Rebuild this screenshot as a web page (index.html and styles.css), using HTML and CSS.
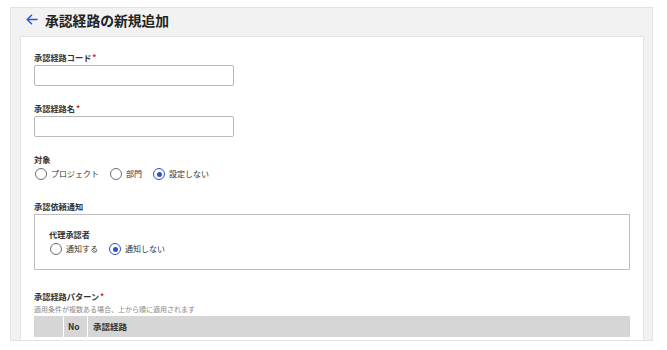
FILE: index.html
```html
<!DOCTYPE html>
<html lang="ja">
<head>
<meta charset="utf-8">
<link rel="stylesheet" href="styles.css">
</head>
<body>
<div class="panel">
  <div class="header">
    <svg class="back" width="12" height="11" viewBox="0 0 12 11"><path d="M11 5.5H1.5M5.5 1.2L1.2 5.5l4.3 4.3" fill="none" stroke="#2f57d0" stroke-width="1.5" stroke-linecap="round" stroke-linejoin="round"/></svg>
    <h1 class="title">承認経路の新規追加</h1>
  </div>
  <div class="card">
    <div class="field">
      <div class="label">承認経路コード<span class="req">*</span></div>
      <input class="input" type="text">
    </div>
    <div class="field">
      <div class="label">承認経路名<span class="req">*</span></div>
      <input class="input" type="text">
    </div>
    <div class="field field-radio">
      <div class="label">対象</div>
      <div class="radios">
        <label class="radio"><span class="circle"></span>プロジェクト</label>
        <label class="radio"><span class="circle"></span>部門</label>
        <label class="radio"><span class="circle checked"></span>設定しない</label>
      </div>
    </div>
    <div class="field field-box">
      <div class="label">承認依頼通知</div>
      <div class="box">
        <div class="label">代理承認者</div>
        <div class="radios">
          <label class="radio"><span class="circle"></span>通知する</label>
          <label class="radio"><span class="circle checked"></span>通知しない</label>
        </div>
      </div>
    </div>
    <div class="field">
      <div class="label">承認経路パターン<span class="req">*</span></div>
      <div class="hint">適用条件が複数ある場合、上から順に適用されます</div>
      <div class="thead">
        <div class="th th-handle"></div>
        <div class="th th-no">No</div>
        <div class="th th-name">承認経路</div>
      </div>
    </div>
  </div>
</div>
</body>
</html>
```
FILE: styles.css
```css
html, body {
  margin: 0;
  background: #fff;
}
body {
  padding: 7px 14px 0 10px;
  font-family: "Noto Sans CJK JP", "Noto Sans", sans-serif;
  color: #333;
}
.panel {
  box-sizing: border-box;
  height: 334px;
  overflow: hidden;
  background: #f2f2f2;
  border: 1px solid #e2e2e2;
  padding: 0 8px 0 9px;
}
.header {
  height: 28px;
  display: flex;
  align-items: center;
  padding: 0 0 5px 6px;
  box-sizing: border-box;
}
.back {
  display: block;
  margin-right: 7px;
}
.title {
  margin: 0;
  font-size: 13.8px;
  line-height: 20px;
  font-weight: 700;
  color: #222;
}
.card {
  background: #fff;
  border: 1px solid #e3e3e3;
  padding: 13px 13px 20px;
  min-height: 400px;
}
.field {
  margin-bottom: 15px;
}
.field-radio {
  margin-bottom: 18px;
}
.field-box {
  margin-bottom: 19px;
}
.label {
  font-size: 8.2px;
  line-height: 14px;
  font-weight: 700;
  color: #333;
}
.req {
  color: #e0302a;
  margin-left: 1px;
}
.input {
  display: block;
  box-sizing: border-box;
  width: 200px;
  height: 21px;
  margin: 1px 0 0;
  border: 1px solid #b8b8b8;
  border-radius: 2px;
  background: #fff;
  padding: 0 6px;
}
.radios {
  display: flex;
  align-items: center;
  height: 14px;
  margin-top: 1px;
}
.radio {
  display: flex;
  align-items: center;
  font-size: 8px;
  line-height: 14px;
  color: #333;
  margin-right: 10px;
}
.circle {
  box-sizing: border-box;
  width: 12px;
  height: 12px;
  border: 1px solid #6d6d6d;
  border-radius: 50%;
  margin: 0 4px 0 1px;
  background: #fff;
  position: relative;
}
.circle.checked {
  border: 1.5px solid #2f52c9;
}
.circle.checked::after {
  content: "";
  position: absolute;
  left: 50%;
  top: 50%;
  width: 5px;
  height: 5px;
  margin: -2.5px 0 0 -2.5px;
  border-radius: 50%;
  background: #2f52c9;
}
.box {
  margin-top: 1px;
  border: 1px solid #bdbdbd;
  padding: 12px 14px 13px;
}
.box .radios {
  margin-top: 1px;
}
.hint {
  font-size: 7px;
  line-height: 12px;
  color: #888;
}
.thead {
  display: flex;
  margin-top: 1px;
  height: 21px;
  background: #d6d6d6;
}
.th {
  font-size: 8.5px;
  line-height: 21px;
  font-weight: 700;
  color: #333;
}
.th-handle {
  width: 29px;
  border-right: 1px solid #fff;
}
.th-no {
  width: 19px;
  padding-left: 4px;
  border-right: 1px solid #fff;
}
.th-name {
  padding-left: 5px;
}
```
